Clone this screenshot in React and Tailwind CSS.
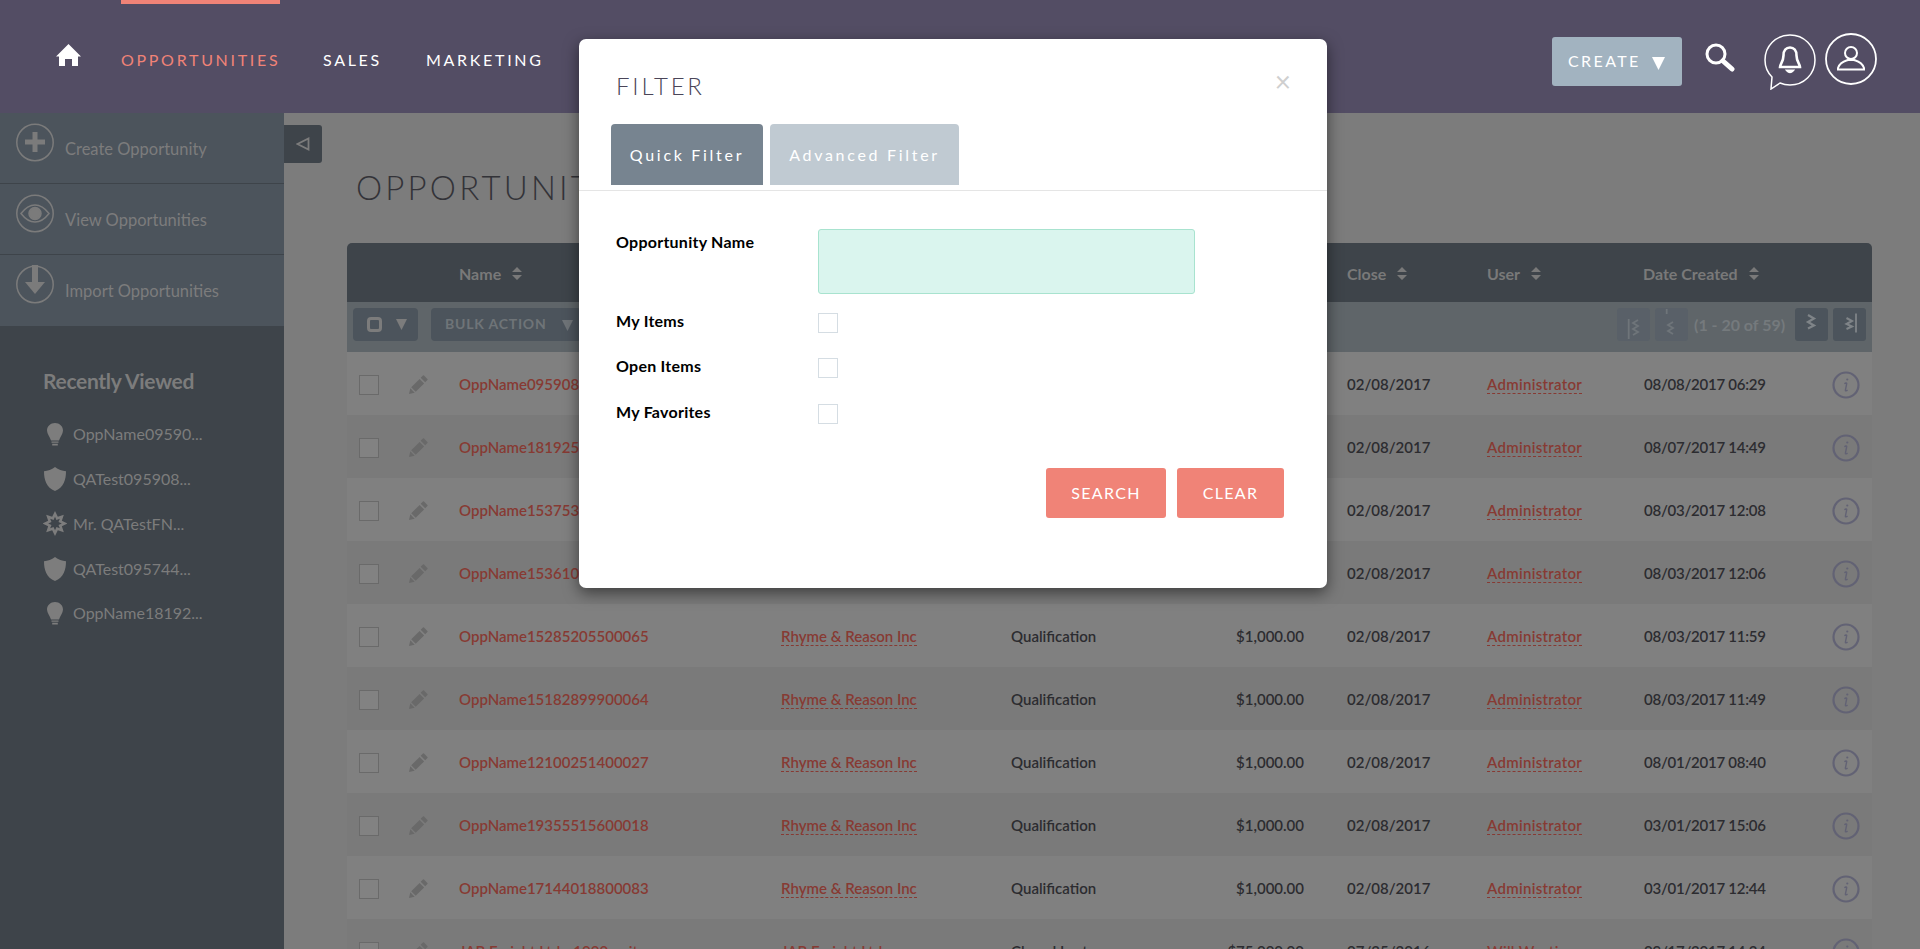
const font = { fontFamily: 'Lato, sans-serif' };

const rows = [
  ['OppName09590800012', 'Rhyme & Reason Inc', 'Qualification', '$1,000.00', '02/08/2017', 'Administrator', '08/08/2017 06:29'],
  ['OppName18192500047', 'Rhyme & Reason Inc', 'Qualification', '$1,000.00', '02/08/2017', 'Administrator', '08/07/2017 14:49'],
  ['OppName15375300071', 'Rhyme & Reason Inc', 'Qualification', '$1,000.00', '02/08/2017', 'Administrator', '08/03/2017 12:08'],
  ['OppName15361000068', 'Rhyme & Reason Inc', 'Qualification', '$1,000.00', '02/08/2017', 'Administrator', '08/03/2017 12:06'],
  ['OppName15285205500065', 'Rhyme & Reason Inc', 'Qualification', '$1,000.00', '02/08/2017', 'Administrator', '08/03/2017 11:59'],
  ['OppName15182899900064', 'Rhyme & Reason Inc', 'Qualification', '$1,000.00', '02/08/2017', 'Administrator', '08/03/2017 11:49'],
  ['OppName12100251400027', 'Rhyme & Reason Inc', 'Qualification', '$1,000.00', '02/08/2017', 'Administrator', '08/01/2017 08:40'],
  ['OppName19355515600018', 'Rhyme & Reason Inc', 'Qualification', '$1,000.00', '02/08/2017', 'Administrator', '03/01/2017 15:06'],
  ['OppName17144018800083', 'Rhyme & Reason Inc', 'Qualification', '$1,000.00', '02/08/2017', 'Administrator', '03/01/2017 12:44'],
  ['JAB Freight Ltd - 1000 units', 'JAB Freight Ltd', 'Closed Lost', '$75,000.00', '07/25/2016', 'Will Westin', '09/17/2017 14:24'],
];

// 8 spiked star used for the contact icon
function starPath(cx, cy, outer, inner) {
  const pts = [];
  for (let i = 0; i < 16; i++) {
    const r = i % 2 === 0 ? outer : inner;
    const a = (Math.PI / 8) * i - Math.PI / 2;
    pts.push(`${(cx + r * Math.cos(a)).toFixed(2)} ${(cy + r * Math.sin(a)).toFixed(2)}`);
  }
  return `M${pts.join('L')}z`;
}

function Home() {
  return (
    <svg width="25" height="22" viewBox="0 0 25 22" fill="#fff">
      <path d="M12.5 0 25 12.5h-3V22h-6v-7H9v7H3v-9.500H0z" />
    </svg>
  );
}

function SortArrows() {
  return (
    <svg className="ml-[11px]" width="10" height="13" viewBox="0 0 10 13" fill="currentColor">
      <path d="M5 0 10 5H0zM5 13 0 8h10z" />
    </svg>
  );
}

function Pencil() {
  return (
    <svg width="19" height="19" viewBox="0 0 19 19" fill="#696969">
      <path d="M0 19l1.300-5.700 4.400 4.400zM2.200 12.300 10.600 3.900l4.500 4.500-8.400 8.400zM11.700 2.800 13.900.6q.6-.5 1.100 0l3.400 3.400q.5.500 0 1.100l-2.200 2.200z" />
    </svg>
  );
}

function InfoIcon() {
  return (
    <svg width="28" height="28" viewBox="0 0 28 28" fill="none" stroke="#626274" strokeWidth="2.200">
      <circle cx="14" cy="14" r="12.500" />
      <path d="M12.400 12.700c1-.7 2.400-1 2.300 0l-1.300 6.500c-.1 1 1 .8 2.200 0" strokeWidth="1.400" />
      <circle cx="15.300" cy="8.500" r="1.100" fill="#626274" stroke="none" />
    </svg>
  );
}

function SideAction({ label, children, last }) {
  return (
    <div className={`h-[71px] flex border-[#3e444a] ${last ? '' : 'border-b'}`}>
      <svg className="ml-[16px] mt-[10px]" width="38" height="39" viewBox="0 0 38 39" fill="none" stroke="#7b7b7b" strokeWidth="1.500">
        <circle cx="19" cy="19.500" r="18.200" />
        {children}
      </svg>
      <span className="ml-[11px] mt-[24px] text-[16.5px] leading-[24px] text-[#7c7c7c]">{label}</span>
    </div>
  );
}

function Lightbulb() {
  return (
    <svg width="16" height="23" viewBox="0 0 16 23" fill="#7d7d7d">
      <path d="M8 0c4.500 0 8 3.200 8 7.500 0 3.500-3 6.500-4 10H4c-1-3.500-4-6.500-4-10C0 3.200 3.500 0 8 0zM4.500 18.500h7v1.300h-7zM5.200 20.800h5.600V22.500H5.200z" />
    </svg>
  );
}

function Shield() {
  return (
    <svg width="22" height="24" viewBox="0 0 23 25" fill="#7d7d7d">
      <path d="M11.500 0C15 3 19 4 23 4.300c0 9-2.500 17-11.500 20.700C2.500 21.300 0 13.300 0 4.300 4 4 8 3 11.500 0z" />
    </svg>
  );
}

function Badge() {
  return (
    <svg width="24" height="25" viewBox="0 0 24 25" fill="#7d7d7d" fillRule="evenodd">
      <path d={`${starPath(12, 12.5, 12.5, 7.400)}${starPath(12, 12.5, 6.800, 3.800)}`} />
    </svg>
  );
}

function Recent({ icon, label }) {
  return (
    <div className="h-[44.750px] flex items-center">
      <span className="-ml-[1px] w-[26px] flex justify-center">{icon}</span>
      <span className="ml-[5px] text-[16px] text-[#7c7c7c]">{label}</span>
    </div>
  );
}

function PageBtn({ dim, children }) {
  return (
    <span className={`block w-[33px] h-[33px] rounded-[3px] ${dim ? 'bg-[#596068]' : 'bg-[#4c545c]'}`}>
      {children}
    </span>
  );
}

function PageIcon({ color, children }) {
  return (
    <svg width="33" height="33" viewBox="0 0 33 33" fill="none" stroke={color} strokeWidth="1.800">
      {children}
    </svg>
  );
}

function Row({ row, odd }) {
  const linkCls = 'text-[#873a33]';
  return (
    <div className={`h-[63px] pt-[2px] flex items-center text-[15px] font-semibold ${odd ? 'bg-[#808080]' : 'bg-[#7a7a7a]'}`}>
      <span className="ml-[12px] w-[20px] h-[20px] border border-[#6a6a6a] bg-[#828282]" />
      <span className="ml-[30px] w-[19px]"><Pencil /></span>
      <span className={`ml-[31px] w-[322px] whitespace-nowrap ${linkCls}`}>{row[0]}</span>
      <span className={`w-[230px] ${linkCls}`}><span className="border-b border-dashed border-[#873a33]">{row[1]}</span></span>
      <span className="w-[170px] text-[#2c2c30]">{row[2]}</span>
      <span className="w-[123px] text-right text-[#2c2c30]">{row[3]}</span>
      <span className="ml-[43px] w-[140px] text-[#2c2c30]">{row[4]}</span>
      <span className={`w-[157px] tracking-[0.3px] ${linkCls}`}><span className="border-b border-dashed border-[#873a33]">{row[5]}</span></span>
      <span className="w-[188px] tracking-[-0.25px] text-[#2c2c30]">{row[6]}</span>
      <InfoIcon />
    </div>
  );
}

export default function App() {
  return (
    <div className="relative w-full h-[949px] overflow-hidden bg-[#7c7c7c]" style={font}>
      {/* top nav */}
      <header className="relative z-20 h-[113px] bg-[#534d64] flex">
        <div className="ml-[56px] mt-[44px]"><Home /></div>
        <nav className="ml-[40px] flex text-[16px] tracking-[2.700px]">
          <span className="w-[159px] h-[113px] border-t-4 border-[#f08377] pt-[45px] leading-[22px] whitespace-nowrap text-[#f08377]">OPPORTUNITIES</span>
          <span className="ml-[43px] pt-[49px] leading-[22px] text-white">SALES</span>
          <span className="ml-[44px] pt-[49px] leading-[22px] text-white">MARKETING</span>
        </nav>
        <div className="ml-auto flex items-start">
          <button className="mt-[37px] w-[130px] h-[49px] rounded-[3px] bg-[#a2b3c0] text-white text-[16px] tracking-[2.400px] flex items-center pl-[16px] pb-[2px]">
            CREATE
            <svg className="ml-[11px] mt-[5px]" width="13" height="13" viewBox="0 0 13 13" fill="#fff"><path d="M0 0h13L6.500 13z" /></svg>
          </button>
          <svg className="ml-[23px] mt-[43px]" width="30" height="29" viewBox="0 0 30 29" fill="none" stroke="#fff">
            <circle cx="11" cy="11" r="9" strokeWidth="3" />
            <path d="M18 18l9 8" strokeWidth="5" strokeLinecap="round" />
          </svg>
          <svg className="ml-[29px] mt-[34px]" width="52" height="56" viewBox="0 0 52 56" fill="none" stroke="#fff" strokeWidth="1.500">
            <path d="M8 43C3 38 1 32 1 26 1 12 12 1 26 1s25 11 25 25-11 25-25 25c-4 0-7-.7-10-2l-9 6z" />
            <path d="M26 13.500c4 0 6.500 3 6.500 8 0 6 3.500 9 3.500 11.500H16c0-2.500 3.500-5.500 3.500-11.500 0-5 2.500-8 6.500-8z" strokeWidth="2.600" />
            <path d="M23 36.500h6q-3 3.500-6 0z" fill="#fff" strokeWidth="2" />
          </svg>
          <svg className="ml-[9px] mt-[33px] mr-[43px]" width="52" height="52" viewBox="0 0 52 52" fill="none" stroke="#fff" strokeWidth="1.800">
            <circle cx="26" cy="26" r="25" />
            <circle cx="26" cy="20" r="6" strokeWidth="2" />
            <path d="M13 35c2-6 7-7 10-8h6c3 1 8 2 10 8v1.500H13z" strokeWidth="2" />
          </svg>
        </div>
      </header>

      <div className="flex h-[836px]">
        <aside className="w-[284px] shrink-0 bg-[#3e444a]">
          <div className="h-[213px] bg-[#4c545c]">
            <SideAction label="Create Opportunity">
              <path d="M19 9v20M9 19h20" strokeWidth="5" />
            </SideAction>
            <SideAction label="View Opportunities">
              <path d="M5 19.500C10 13 14 11 19 11s9 2 14 8.500C28 26 24 28 19 28S10 26 5 19.500z" />
              <circle cx="19" cy="19.500" r="6" fill="#7b7b7b" />
            </SideAction>
            <SideAction label="Import Opportunities" last>
              <path d="M19 0v17" strokeWidth="6" />
              <path d="M9 17h20L19 29z" fill="#7b7b7b" stroke="none" />
            </SideAction>
          </div>
          <div className="pt-[41px] pl-[43px]">
            <h3 className="text-[21px] font-bold leading-[28px] text-[#7c7c7c] tracking-[-0.3px]">Recently Viewed</h3>
            <div className="mt-[17px]">
              <Recent icon={<Lightbulb />} label="OppName09590..." />
              <Recent icon={<Shield />} label="QATest095908..." />
              <Recent icon={<Badge />} label="Mr. QATestFN..." />
              <Recent icon={<Shield />} label="QATest095744..." />
              <Recent icon={<Lightbulb />} label="OppName18192..." />
            </div>
          </div>
        </aside>

        <main className="flex-1 min-w-0 relative">
          <button className="absolute left-0 top-[12px] w-[38px] h-[38px] rounded-r-[3px] bg-[#3e444a] flex items-center justify-center">
            <svg width="14" height="14" viewBox="0 0 14 14" fill="none" stroke="#7c7c7c" strokeWidth="1.800"><path d="M12.500 1.500v11L1.500 7z" /></svg>
          </button>
          <h1 className="ml-[72px] pt-[50px] h-[130px] text-[33px] leading-[48px] font-light tracking-[3.200px] text-[#333338]">OPPORTUNITIES</h1>

          <div className="ml-[63px] w-[1525px]">
            <div className="h-[59px] pt-[2px] rounded-t-[5px] bg-[#3e444a] flex items-center text-[16px] font-bold text-[#797979]">
              <span className="ml-[112px] w-[322px] flex items-center">Name<SortArrows /></span>
              <span className="w-[230px] flex items-center">Account Name<SortArrows /></span>
              <span className="w-[170px] flex items-center">Sales Stage<SortArrows /></span>
              <span className="w-[166px] pr-[30px] flex items-center justify-end">Amount<SortArrows /></span>
              <span className="w-[140px] flex items-center">Close<SortArrows /></span>
              <span className="w-[156px] flex items-center">User<SortArrows /></span>
              <span className="flex items-center">Date Created<SortArrows /></span>
            </div>
            <div className="h-[50px] pt-[6px] bg-[#5f6569] flex items-start">
              <span className="ml-[6px] w-[65px] h-[33px] rounded-[4px] bg-[#4c545c] flex items-center pl-[14px]">
                <span className="w-[15px] h-[15px] rounded-[4px] border-[3px] border-[#7c7c7c]" />
                <svg className="ml-[14px]" width="11" height="11" viewBox="0 0 11 11" fill="#7c7c7c"><path d="M0 0h11L5.500 11z" /></svg>
              </span>
              <span className="ml-[13px] h-[33px] w-[150px] rounded-[4px] bg-[#4c545c] flex items-center pl-[14px] pb-[2px] text-[14px] font-bold tracking-[0.800px] text-[#6f7478]">
                BULK ACTION
                <svg className="ml-[15px] mt-[3px]" width="11" height="11" viewBox="0 0 11 11" fill="#6f7478"><path d="M0 0h11L5.500 11z" /></svg>
              </span>
              <div className="ml-auto mr-[6px] flex items-center gap-[5px]">
                <PageBtn dim>
                  <PageIcon color="#6f757a">
                    <path d="M11.700 11v20" />
                    <path d="M21 12l-5 3 5 3-5 3 5 3-5 3" />
                  </PageIcon>
                </PageBtn>
                <PageBtn dim>
                  <PageIcon color="#6f757a">
                    <path d="M11.700 1v5" />
                    <path d="M18 14l-5 3 5 3-5 3 5 3" />
                  </PageIcon>
                </PageBtn>
                <span className="ml-[1px] mr-[4px] w-[92px] whitespace-nowrap text-[16px] font-bold text-[#757a7d]">(1 - 20 of 59)</span>
                <PageBtn>
                  <PageIcon color="#7f8488">
                    <path d="M13 7l6 3.500-6 3.500 6 3.500-6 3" strokeWidth="2.200" />
                  </PageIcon>
                </PageBtn>
                <PageBtn>
                  <PageIcon color="#7f8488">
                    <path d="M13.500 10l5.500 3-5.500 3 5.500 2.500-5.500 2.500" strokeWidth="2" />
                    <path d="M23 5.600v19" />
                  </PageIcon>
                </PageBtn>
              </div>
            </div>
            {rows.map((row, i) => (
              <Row key={row[0]} row={row} odd={i % 2 === 0} />
            ))}
          </div>
        </main>
      </div>

      {/* filter dialog, the page colours are already dimmed */}
      <div className="absolute left-[579px] top-[39px] z-30 w-[748px] h-[549px] bg-white rounded-[7px] shadow-[0_5px_15px_rgba(0,0,0,0.5)]">
        <h2 className="absolute left-[37px] top-[32px] text-[24px] leading-[30px] font-light tracking-[2.800px] text-[#4a4558]">FILTER</h2>
        <span className="absolute right-[36px] top-[30px] text-[28px] leading-[24px] text-[#cfcfcf]">×</span>
        <div className="h-[152px] border-b border-[#e5e5e5] pt-[85px] pl-[32px] flex items-start gap-[7px]">
          <span className="w-[152px] h-[61px] rounded-t-[4px] bg-[#778490] text-white text-[16px] tracking-[2.700px] flex items-center justify-center">Quick Filter</span>
          <span className="w-[189px] h-[61px] rounded-t-[4px] bg-[#c0cad2] text-white text-[16px] tracking-[2.700px] flex items-center justify-center">Advanced Filter</span>
        </div>
        <div className="pl-[37px] text-[16px] font-bold tracking-[0.25px] text-black">
          <div className="mt-[38px] flex">
            <label className="w-[202px] leading-[22px] mt-[2px]">Opportunity Name</label>
            <span className="w-[377px] h-[65px] rounded-[3px] border border-[#a8e3cf] bg-[#daf5ee]" />
          </div>
          <div className="mt-[19px] flex items-center h-[20px]">
            <label className="w-[202px] pb-[5px]">My Items</label>
            <span className="w-[20px] h-[20px] border border-[#d5dde3]" />
          </div>
          <div className="mt-[25px] flex items-center h-[20px]">
            <label className="w-[202px] pb-[5px]">Open Items</label>
            <span className="w-[20px] h-[20px] border border-[#d5dde3]" />
          </div>
          <div className="mt-[26px] flex items-center h-[20px]">
            <label className="w-[202px] pb-[5px]">My Favorites</label>
            <span className="w-[20px] h-[20px] border border-[#d5dde3]" />
          </div>
        </div>
        <div className="mt-[44px] pr-[43px] flex justify-end gap-[11px] text-[16px] tracking-[1.300px] text-white">
          <button className="w-[120px] h-[50px] rounded-[3px] bg-[#f08377]">SEARCH</button>
          <button className="w-[107px] h-[50px] rounded-[3px] bg-[#f08377]">CLEAR</button>
        </div>
      </div>
    </div>
  );
}
